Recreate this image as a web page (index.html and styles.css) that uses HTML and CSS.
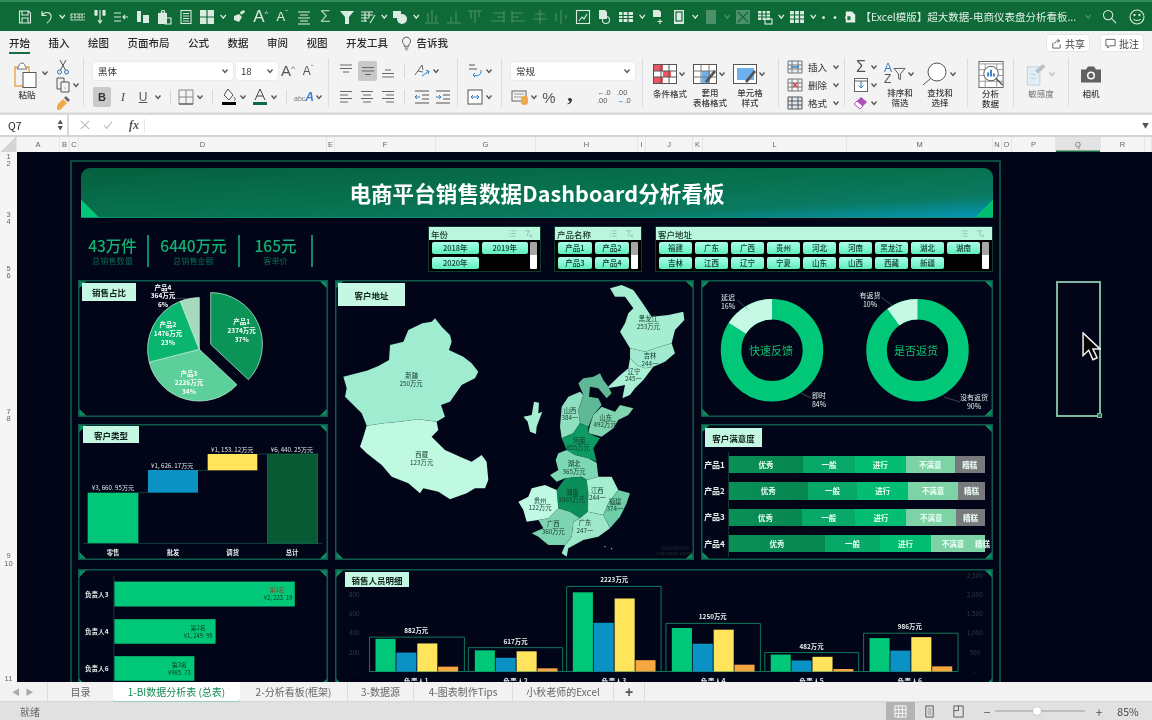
FILE: index.html
```html
<!DOCTYPE html>
<html lang="zh-CN">
<head>
<meta charset="utf-8">
<title>电商仪表盘分析看板</title>
<link rel="stylesheet" href="styles.css">
</head>
<body>
<svg class="defs" aria-hidden="true"><symbol id="car" viewBox="0 0 10 10"><path d="M2.5 3.5L5 6.5l2.5-3" fill="none" stroke="currentColor" stroke-width="1.3"/></symbol>
<symbol id="at" viewBox="0 0 18 18"><path d="M3 3h12M3 6.500h12M6 10h6" fill="none" stroke="currentColor" stroke-width="1"/></symbol>
<symbol id="am" viewBox="0 0 18 18"><path d="M3 5.500h12M3 9h12M6 12.500h6" fill="none" stroke="currentColor" stroke-width="1"/></symbol>
<symbol id="ab" viewBox="0 0 18 18"><path d="M6 8h6M3 11.500h12M3 15h12" fill="none" stroke="currentColor" stroke-width="1"/></symbol>
<symbol id="al" viewBox="0 0 18 18"><path d="M3 3.500h12M3 7h8M3 10.500h12M3 14h8" fill="none" stroke="currentColor" stroke-width="1"/></symbol>
<symbol id="ac" viewBox="0 0 18 18"><path d="M3 3.500h12M5 7h8M3 10.500h12M5 14h8" fill="none" stroke="currentColor" stroke-width="1"/></symbol>
<symbol id="ar" viewBox="0 0 18 18"><path d="M3 3.500h12M7 7h8M3 10.500h12M7 14h8" fill="none" stroke="currentColor" stroke-width="1"/></symbol>
<symbol id="sli" viewBox="0 0 10 8"><path d="M1 1h1M1 4h1M1 7h1M3.500 1h5M3.500 4h5M3.500 7h5" stroke="currentColor" stroke-width=".8"/></symbol>
<symbol id="slf" viewBox="0 0 10 8"><path d="M1 1h5L4 4v3M6 5l3 3M9 5L6 8" fill="none" stroke="currentColor" stroke-width=".8"/></symbol></svg>
<div class="app">

<header class="qat">
<svg class="q" viewBox="0 0 16 16"><path d="M2.500 2h9l2 2v10h-11zM5 2v4h6V2M5 14V9h6v5"/></svg>
<svg class="q" viewBox="0 0 16 16"><path d="M4 2v4.500h4.500M4 6.500c2-4 8-4 9 0 .7 3-1.500 5.500-4 7.500"/></svg>
<svg class="qc"><use href="#car"/></svg>
<svg class="q" viewBox="0 0 16 16"><path d="M1 5h14M1 8h14M1 11h14M1 5v6M5 5v6M9 5v6M12 5v6" stroke-dasharray="2 .6"/></svg>
<svg class="q" viewBox="0 0 16 16"><path d="M4 1v6M12 1v6M8 1v14M6 11l2 3 2-3M3 1v5h2V1M11 1v5h2V1"/></svg>
<svg class="q" viewBox="0 0 16 16"><path d="M1 4h7M1 8h7M1 12h7M15 8H10M12 6l-2 2 2 2"/></svg>
<svg class="q" viewBox="0 0 16 16"><rect class="f" x="2" y="2" width="4" height="11"/><rect class="f" x="8" y="6" width="6" height="8"/></svg>
<svg class="q" viewBox="0 0 16 16"><path class="f" d="M2 4h9v11H2z"/><path d="M6 1.500h2l1 2.500H5zM9 9h6v6H9z"/></svg>
<svg class="q" viewBox="0 0 16 16"><rect x="3" y="1.500" width="10" height="13"/><path d="M5 4.500h6M5 7h6M5 9.500h6M5 12h6"/></svg>
<svg class="q" viewBox="0 0 16 16"><rect class="f" x="1" y="1" width="14" height="14"/><path class="cut" d="M8 1v14M1 8h14"/></svg>
<svg class="qc"><use href="#car"/></svg>
<svg class="q" viewBox="0 0 16 16"><path class="f" d="M9 3l4-2 1 2-4 3zM3 7l5-2 3 3-3 5-5-2z"/></svg>
<span class="qa">A<sup>^</sup></span>
<span class="qa sm">A<sup>ˇ</sup></span>
<svg class="q" viewBox="0 0 16 16"><path d="M2 3h12M4 6h8M2 9h12M4 12h8M2 15h12"/></svg>
<span class="qs">Σ</span>
<svg class="q" viewBox="0 0 16 16"><path class="f" d="M1 2h14L10 8v7H6V8z"/></svg>
<svg class="q" viewBox="0 0 16 16"><path d="M1 3h12M1 6h12M1 9h8M1 12h6M5 3v10M9 3v6M15 6l-5 8"/></svg>
<svg class="qc"><use href="#car"/></svg>
<svg class="q" viewBox="0 0 16 16"><path class="f" d="M1 2h8v7H1z"/><circle class="f" cx="10" cy="10" r="5"/></svg>
<svg class="qc"><use href="#car"/></svg>
<svg class="q dim" viewBox="0 0 16 16"><path d="M1 14h14M4 5v8M8 2v11M12 7v6M3 5h2M7 2h2M11 7h2"/></svg>
<svg class="q dim" viewBox="0 0 16 16"><path d="M1 14h14M5 8v6M10 2v12"/></svg>
<svg class="q dim" viewBox="0 0 16 16"><path d="M1 2h14M4 2v8M8 2v12M12 2v6"/></svg>
<svg class="q dim" viewBox="0 0 16 16"><path d="M15 2v12M4 4h11M8 8h7M2 12h13"/></svg>
<svg class="q dim" viewBox="0 0 16 16"><path d="M2 2v12M2 4h11M2 8h7M2 12h13"/></svg>
<svg class="q dim" viewBox="0 0 16 16"><path d="M8 1v14M3 5h10M1 10h14"/></svg>
<svg class="q dim" viewBox="0 0 16 16"><path d="M8 1v14M3 4v8M13 6v4"/></svg>
<svg class="q" viewBox="0 0 16 16"><rect x="1.500" y="1.500" width="13" height="13"/><path d="M4 12l3-4 2 2 3-5"/></svg>
<svg class="q" viewBox="0 0 16 16"><path class="f" d="M3 1h6l2 2v7H3v5"/><circle cx="10" cy="11" r="3.500"/></svg>
<svg class="q" viewBox="0 0 16 16"><path class="f" d="M1 3h14v10H1z"/><path class="cut" d="M1 6.500h14M1 9.500h14M5 3v10M10 3v10"/></svg>
<svg class="qc"><use href="#car"/></svg>
<svg class="q" viewBox="0 0 16 16"><path class="f" d="M3 1h6l2 2v5H3v7"/><path d="M10 10v5M7.500 12.500h5"/></svg>
<svg class="q" viewBox="0 0 16 16"><rect class="f" x="3" y="1" width="10" height="14"/><rect class="cut" x="5" y="3" width="6" height="9"/></svg>
<svg class="qc"><use href="#car"/></svg>
<svg class="q dim" viewBox="0 0 16 16"><rect class="f" x="3" y="1" width="10" height="14"/></svg>
<svg class="qc dim"><use href="#car"/></svg>
<svg class="q dim" viewBox="0 0 16 16"><rect class="f" x="1" y="1" width="14" height="14"/><path class="cut" d="M3 3l10 10M13 3L3 13"/></svg>
<svg class="q" viewBox="0 0 16 16"><path class="f" d="M1 2h12v9H1z"/><path class="cut" d="M1 5h12M1 8h12M5 2v9M9 2v9"/><rect x="8" y="10" width="7" height="5"/></svg>
<svg class="qc"><use href="#car"/></svg>
<svg class="q" viewBox="0 0 16 16"><path class="f" d="M1 2h14v12H1z"/><path class="cut" d="M1 6h14M1 10h14M5.500 2v12M10.500 2v12"/></svg>
<svg class="qc"><use href="#car"/></svg>
<span class="qdots">···</span>
<svg class="qdoc" viewBox="0 0 14 16"><path d="M1 1h8l4 4v10H1z" fill="#e4efe8"/><path d="M3 7h4v5H3z" fill="#1c7a4a"/></svg>
<span class="qtitle">【Excel模版】超大数据-电商仪表盘分析看板...</span>
<svg class="qc dim qtc"><use href="#car"/></svg>
<svg class="qr" viewBox="0 0 16 16"><circle cx="6.500" cy="6.500" r="5"/><path d="M10 10l5 5"/></svg>
<svg class="qr" viewBox="0 0 16 16"><circle cx="8" cy="8" r="7"/><circle cx="5.500" cy="6" r=".6"/><circle cx="10.500" cy="6" r=".6"/><path d="M4.500 10c1.500 2 5.500 2 7 0"/></svg>
</header>

<nav class="tabs">
<span class="tab on">开始</span><span class="tab">插入</span><span class="tab">绘图</span><span class="tab">页面布局</span><span class="tab">公式</span><span class="tab">数据</span><span class="tab">审阅</span><span class="tab">视图</span><span class="tab">开发工具</span>
<span class="tab tell"><svg class="bulb" viewBox="0 0 12 16"><path d="M6 1a4.500 4.500 0 0 0-2.500 8.200V11h5V9.200A4.500 4.500 0 0 0 6 1zM4 13h4M5 15h2" fill="none" stroke="#555"/></svg>告诉我</span>
<span class="acts">
<span class="act"><svg class="acti" viewBox="0 0 12 12"><path d="M2 5v6h8V7M4 6c1-3 3-3 5-3M7 1l2.500 2L7 5" fill="none" stroke="#555"/></svg>共享</span>
<span class="act"><svg class="acti" viewBox="0 0 12 12"><path d="M1 1.500h10v7H5L3 11V8.500H1z" fill="none" stroke="#555"/></svg>批注</span>
</span>
</nav>

<section class="ribbon">

<div class="grp g1">
<div class="paste"><svg class="pic" viewBox="0 0 24 26"><path d="M2 5h14v19H2z" fill="none" stroke="#e7a64a" stroke-width="1.400"/><path d="M6 4c0-4 6-4 6 0l2 3H4z" fill="#fff" stroke="#777"/><rect x="10" y="10.500" width="13" height="15" fill="#fff" stroke="#555"/></svg><span class="lb">粘贴</span></div>
<svg class="cr cr-paste"><use href="#car"/></svg>
<div class="clip">
<div class="ci"><svg class="ic16" viewBox="0 0 16 16"><circle cx="4.500" cy="13" r="2" fill="none" stroke="#3a6ea5"/><circle cx="11.500" cy="13" r="2" fill="none" stroke="#3a6ea5"/><path d="M5.500 11L11 1M10.500 11L5 1" stroke="#555" fill="none"/></svg></div>
<div class="ci"><svg class="ic16" viewBox="0 0 16 16"><path d="M2 1h7v11H2z" fill="none" stroke="#555"/><path d="M6 5h8v10H6z" fill="#f3f3f3" stroke="#555"/><path d="M9 11h2" stroke="#e7a64a"/></svg><svg class="cr"><use href="#car"/></svg></div>
<div class="ci"><svg class="ic16" viewBox="0 0 16 16"><path d="M3 9l5-5 4 4-5 5-2 2H2v-3z" fill="#f0a848"/><path d="M9 3l2-2 4 4-2 2z" fill="#666"/></svg></div>
</div>
</div>

<div class="grp g2">
<div class="row">
<span class="sel s-font">黑体<svg class="cr"><use href="#car"/></svg></span>
<span class="sel s-size">18<svg class="cr"><use href="#car"/></svg></span>
<span class="bigA">A<sup>^</sup></span><span class="bigA small">A<sup class="bl">ˇ</sup></span>
</div>
<div class="row">
<span class="btn on bb">B</span><span class="btn ii">I</span><span class="btn uu">U</span><svg class="cr"><use href="#car"/></svg>
<i class="sep s1"></i>
<svg class="ic18" viewBox="0 0 18 18"><path d="M2 2h14v14H2zM9 2v14M2 9h14" fill="none" stroke="#888"/><path d="M2 16h14" stroke="#444"/></svg><svg class="cr"><use href="#car"/></svg>
<i class="sep s2"></i>
<svg class="ic18" viewBox="0 0 18 18"><path d="M8 1l5 6-4 5-5-5zM14 9c1 1.500 2 3 0 3.500" fill="none" stroke="#555"/><rect x="2" y="14" width="14" height="3"/></svg><svg class="cr"><use href="#car"/></svg>
<svg class="ic18 m3" viewBox="0 0 18 18"><path d="M4 12L9 1l5 11M6 8h6" fill="none" stroke="#444"/><rect x="2" y="14" width="14" height="3" fill="#0d6b45"/></svg><svg class="cr"><use href="#car"/></svg>
<i class="sep s3"></i>
<span class="abc">abc<b>A</b></span><svg class="cr"><use href="#car"/></svg>
</div>
</div>

<div class="grp g3">
<div class="row">
<svg class="ic18"><use href="#at"/></svg><span class="btn on mid"><svg class="ic18"><use href="#am"/></svg></span><svg class="ic18 m2"><use href="#ab"/></svg>
<i class="sep s4"></i>
<svg class="ic18" viewBox="0 0 18 18"><path d="M2 13L9 3l1 5M5 9l5 1" fill="none" stroke="#666"/><path d="M9 14l7-5M13 8.500l3 .5-1 3" fill="none" stroke="#2f7fc2"/></svg><svg class="cr"><use href="#car"/></svg>
</div>
<div class="row">
<svg class="ic18"><use href="#al"/></svg><svg class="ic18 m3"><use href="#ac"/></svg><svg class="ic18 m3"><use href="#ar"/></svg>
<i class="sep s4"></i>
<svg class="ic18" viewBox="0 0 18 18"><path d="M2 3h14M2 15h14M9 7h7M9 11h7" stroke="#555" fill="none"/><path d="M7 9H2M4 7L2 9l2 2" stroke="#2f7fc2" fill="none"/></svg><svg class="ic18 m3" viewBox="0 0 18 18"><path d="M2 3h14M2 15h14M9 7h7M9 11h7" stroke="#555" fill="none"/><path d="M2 9h5M5 7l2 2-2 2" stroke="#2f7fc2" fill="none"/></svg>
</div>
</div>

<div class="grp g4">
<div class="row"><svg class="ic18" viewBox="0 0 18 18"><path d="M3 3h6M3 7h8" stroke="#555"/><path d="M15 8c1 5-4 7-8 5M9 11l-2 2 2 2" fill="none" stroke="#2f7fc2"/></svg><svg class="cr"><use href="#car"/></svg></div>
<div class="row"><svg class="ic18" viewBox="0 0 18 18"><rect x="2" y="2" width="14" height="14" fill="#fff" stroke="#555"/><path d="M5 9h8M7 7L5 9l2 2M11 7l2 2-2 2" stroke="#2f7fc2" fill="none"/></svg><svg class="cr"><use href="#car"/></svg></div>
</div>

<div class="grp g5">
<div class="row"><span class="sel s-num">常规<svg class="cr"><use href="#car"/></svg></span></div>
<div class="row">
<svg class="ic18" viewBox="0 0 18 18"><rect x="1" y="3" width="14" height="10" fill="none" stroke="#666"/><path d="M3 6h10M3 9h8" stroke="#999"/><rect x="10" y="8" width="7" height="9" rx="3" fill="#f0a848"/></svg><svg class="cr"><use href="#car"/></svg>
<span class="pct">%</span><span class="cma">,</span>
<span class="dec"><b>←</b>.0<br>.00</span><span class="dec d2">.00<br><b>→</b>.0</span>
</div>
</div>

<div class="grp g6">
<div class="big"><div class="bi"><svg class="ic24" viewBox="0 0 24 20"><rect x=".5" y=".5" width="23" height="19" fill="#fff" stroke="#555"/><path d="M1 1h9v6H1zM1 13h9v6H1z" fill="#ee5560"/><path d="M10 7h8v6h-8z" fill="#ee5560"/><path d="M.5 7h23M.5 13h23M8 .5v19M16 .5v19" stroke="#555" fill="none"/></svg><svg class="cr"><use href="#car"/></svg></div><span class="lb">条件格式</span></div>
<div class="big"><div class="bi"><svg class="ic24" viewBox="0 0 24 20"><rect x=".5" y=".5" width="23" height="19" fill="#fff" stroke="#555"/><path d="M9 7h8v12H9z" fill="#6db1ee"/><path d="M.5 7h23M.5 13h23M8 .5v19M16 .5v19" stroke="#777" fill="none"/><path d="M12 17l9-11 2 2-9 11z" fill="#555"/></svg><svg class="cr"><use href="#car"/></svg></div><span class="lb">套用<br>表格格式</span></div>
<div class="big"><div class="bi"><svg class="ic24" viewBox="0 0 24 20"><rect x=".5" y=".5" width="23" height="19" fill="#fff" stroke="#555"/><path d="M4 4h17v12H4z" fill="#6db1ee"/><path d="M12 17l9-11 2 2-9 11z" fill="#555"/></svg><svg class="cr"><use href="#car"/></svg></div><span class="lb">单元格<br>样式</span></div>
</div>

<div class="grp g7">
<div class="lr"><svg class="ic16" viewBox="0 0 16 14"><path d="M1 1h14v12H1zM5 1v12M11 1v12M1 5h14M1 9h14" fill="#e6f0f8" stroke="#777"/><path d="M4 7h8" stroke="#2f7fc2" stroke-width="1.500"/></svg><span>插入</span><svg class="cr"><use href="#car"/></svg></div>
<div class="lr"><svg class="ic16" viewBox="0 0 16 14"><path d="M1 1h14v12H1zM5 1v12M11 1v12M1 5h14M1 9h14" fill="#f3f3f3" stroke="#777"/><path d="M6 5l4 4M10 5L6 9" stroke="#d9434b" stroke-width="1.500"/></svg><span>删除</span><svg class="cr"><use href="#car"/></svg></div>
<div class="lr"><svg class="ic16" viewBox="0 0 16 14"><path d="M1 1h14v12H1zM5 1v12M11 1v12M1 5h14M1 9h14" fill="#dfeaf5" stroke="#555"/></svg><span>格式</span><svg class="cr"><use href="#car"/></svg></div>
</div>

<div class="grp g8">
<div class="clip2">
<div class="ci"><span class="sig">Σ</span><svg class="cr"><use href="#car"/></svg></div>
<div class="ci"><svg class="ic16" viewBox="0 0 16 16"><rect x="1.500" y="1.500" width="13" height="13" fill="#fff" stroke="#666"/><path d="M8 4v7M5.500 8.500L8 11l2.500-2.500" stroke="#2f7fc2" fill="none"/><path d="M1 4h14" stroke="#666"/></svg><svg class="cr"><use href="#car"/></svg></div>
<div class="ci"><svg class="ic16" viewBox="0 0 16 16"><path d="M1 9l7-7 6 5-7 7z" fill="#b04fbb"/><path d="M4 6l6 5-3 3-6-5z" fill="#fff" stroke="#b04fbb"/></svg><svg class="cr"><use href="#car"/></svg></div>
</div>
<div class="big"><div class="bi"><span class="az"><b>A</b>Z</span><svg class="fun" viewBox="0 0 14 16"><path d="M1 2h12L8 8v6l-2-1V8z" fill="none" stroke="#555"/></svg><svg class="cr"><use href="#car"/></svg></div><span class="lb">排序和<br>筛选</span></div>
<div class="big"><div class="bi"><svg class="ic26" viewBox="0 0 26 24"><circle cx="15" cy="10" r="9" fill="#fff" stroke="#555"/><path d="M8.500 16.500L1 23" stroke="#555"/></svg><svg class="cr"><use href="#car"/></svg></div><span class="lb">查找和<br>选择</span></div>
</div>

<div class="grp g9"><div class="big wide"><div class="bi"><svg class="ic26h" viewBox="0 0 26 28"><rect x=".5" y=".5" width="25" height="27" fill="#fff" stroke="#666"/><path d="M.5 3h25M.5 9h25M.5 15h25M.5 21h25M7 3v25M19 3v25" stroke="#999" fill="none"/><circle cx="13" cy="13" r="7.500" fill="#fff" stroke="#555"/><path d="M10 16v-4M13 16V9M16 16v-3" stroke="#3a7fc2" stroke-width="2"/><path d="M18 18l7 7" stroke="#555" stroke-width="1.500"/></svg></div><span class="lb">分析<br>数据</span></div></div>

<div class="grp g10"><div class="big wide"><div class="bi"><svg class="ic22" viewBox="0 0 22 24"><path d="M2 4h13v19H2z" fill="#e3edf6" stroke="#bdd0de"/><path d="M10 8l8-7 3 3-8 7z" fill="#b9c0c6"/><path d="M5 12h6M5 16h6" stroke="#bdd0de"/></svg><svg class="cr lt"><use href="#car"/></svg></div><span class="lb gray">敏感度</span></div></div>

<div class="grp g11"><div class="big wide"><div class="bi"><svg class="ic22" viewBox="0 0 22 18"><path d="M1 4h5l2-3h6l2 3h5v13H1z" fill="#5f6163"/><circle cx="11" cy="10" r="4" fill="#fff"/><circle cx="11" cy="10" r="2.500" fill="#5f6163"/></svg></div><span class="lb">相机</span></div></div>
</section>

<div class="fbar">
<div class="namebox"><span>Q7</span><span class="updown">▲<br>▼</span></div>
<div class="fbtns"><svg class="fx1" viewBox="0 0 12 12"><path d="M1 1l10 10M11 1L1 11" stroke="#bbb" stroke-width="1.300"/></svg><svg class="fx1" viewBox="0 0 12 12"><path d="M1 6l3.500 4L11 2" stroke="#bbb" stroke-width="1.300" fill="none"/></svg><span class="fxt">fx</span></div>
<span class="fcar">▼</span>
</div>

<div class="cols">
<span class="corner"></span><span>A</span><span>B</span><span>C</span><span>D</span><span>E</span><span>F</span><span>G</span><span>H</span><span>I</span><span>J</span><span>K</span><span>L</span><span>M</span><span>N</span><span>O</span><span>P</span><span class="act-col">Q</span><span>R</span><span></span>
</div>

<main class="sheet">
<div class="rows"><span>1</span><span>2</span><span>3</span><span>4</span><span>5</span><span>6</span><span>7</span><span>8</span><span>9</span><span>10</span><span>11</span></div>
<div class="canvas">
<div class="dash">

<div class="banner"><h1>电商平台销售数据Dashboard分析看板</h1></div>

<div class="toprow">
<div class="kpis">
<div class="kpi k1"><strong>43万件</strong><small>总销售数量</small></div>
<div class="kpi k2"><strong>6440万元</strong><small>总销售金额</small></div>
<div class="kpi k3"><strong>165元</strong><small>客单价</small></div>
</div>
<div class="slicer sl1"><div class="slh"><span>年份</span><svg class="sh"><use href="#sli"/></svg><svg class="sh"><use href="#slf"/></svg></div><div class="slb"><div class="slg"><span>2018年</span><span>2019年</span><span>2020年</span></div><i class="scr"></i></div></div>
<div class="slicer sl2"><div class="slh"><span>产品名称</span><svg class="sh"><use href="#sli"/></svg><svg class="sh"><use href="#slf"/></svg></div><div class="slb"><div class="slg"><span>产品1</span><span>产品2</span><span>产品3</span><span>产品4</span></div><i class="scr"></i></div></div>
<div class="slicer sl3"><div class="slh"><span>客户地址</span><svg class="sh"><use href="#sli"/></svg><svg class="sh"><use href="#slf"/></svg></div><div class="slb"><div class="slg"><span>福建</span><span>广东</span><span>广西</span><span>贵州</span><span>河北</span><span>河南</span><span>黑龙江</span><span>湖北</span><span>湖南</span><span>吉林</span><span>江西</span><span>辽宁</span><span>宁夏</span><span>山东</span><span>山西</span><span>西藏</span><span>新疆</span></div><i class="scr"></i></div></div>
</div>

<div class="grid">

<section class="panel p-pie">
<h2 class="tag t-pie">销售占比</h2>
<svg class="fill" viewBox="78 280 250 137">
<g stroke="#c9f2de" stroke-width=".7">
<path fill="#0a9458" d="M210.700 344.300L210.700 292.600A51.700 51.700 0 0 1 248.400 379.700Z"/>
<path fill="#5dcf9a" d="M199.300 349.300L237 384.700A51.700 51.700 0 0 1 149.200 362.200Z"/>
<path fill="#0ab56f" d="M199.300 349.300L149.200 362.200A51.700 51.700 0 0 1 180.300 301.200Z"/>
<path fill="#a6dabd" d="M199.300 349.300L180.300 301.200A51.700 51.700 0 0 1 199.300 297.600Z"/>
</g>
<path d="M175 298.500h14" stroke="#5a7a70" stroke-width=".5"/>
<g class="pl">
<text x="241.700" y="324">产品1</text><text x="241.700" y="333">2374万元</text><text x="241.700" y="342">37%</text>
<text x="168" y="327">产品2</text><text x="168" y="336">1476万元</text><text x="168" y="344.500">23%</text>
<text x="189" y="376">产品3</text><text x="189" y="385">2226万元</text><text x="189" y="393.500">34%</text>
<text x="163" y="289.500">产品4</text><text x="163" y="298">364万元</text><text x="163" y="307">6%</text>
</g>
</svg>
</section>

<section class="panel p-map">
<h2 class="tag t-map">客户地址</h2>
<svg class="fill" viewBox="0 0 1077 840">
<g stroke="#0b1a20" stroke-width=".6" stroke-opacity=".3" stroke-linejoin="round">
<path fill="#9fecd0" d="M25 290L65 280 95 272 130 258 162 240 165 195 205 185 220 150 262 130 290 125 300 115 320 140 345 165 350 185 342 210 385 230 410 250 430 275 420 295 380 315 345 365 318 375 330 410 305 425 250 418 195 425 145 430 95 437 80 400 55 375 30 350 35 325Z"/>
<path fill="#bff9e2" d="M95 437L145 430 195 425 250 418 305 425 310 450 290 470 330 510 375 530 410 545 440 525 455 545 460 600 450 625 420 625 395 640 345 658 310 635 265 625 255 640 220 610 170 590 140 555 95 520 75 500 85 470Z"/>
<path fill="#a6eed2" d="M825 25L860 15 895 30 920 65 950 110 1000 105 1045 95 1048 120 1020 150 1010 190 975 200 930 215 885 205 855 155 870 130 880 100 895 85 870 50 840 50Z"/>
<path fill="#a0ebcf" d="M885 205L930 215 975 200 1010 190 1020 220 990 245 955 260 930 265 905 255 885 235Z"/>
<path fill="#a8efd4" d="M885 235L905 255 930 265 955 260 925 300 900 325 885 345 862 355 870 315 845 320 815 325 850 290 880 265Z"/>
<path fill="#5fb996" d="M730 310L745 295 775 290 795 280 805 300 820 320 830 340 815 355 790 325 765 320 762 350 790 355 800 375 775 405 760 440 735 430 730 390 745 345Z"/>
<path fill="#8fe0c0" d="M735 335L745 345 730 390 735 430 715 460 680 475 675 440 680 380 700 350Z"/>
<path fill="#80d4b0" d="M775 405L800 380 840 395 855 375 895 385 880 405 850 420 835 445 800 470 760 460 765 435Z"/>
<path fill="#0d9a63" d="M680 475L715 460 735 430 760 440 760 460 795 475 775 505 785 545 760 535 720 525 695 510Z"/>
<path fill="#7dd8b4" d="M670 520L695 510 720 525 760 535 785 548 790 590 755 600 740 590 690 595 665 605 645 585 670 570 662 540Z"/>
<path fill="#0a8f5a" d="M690 595L740 590 755 600 760 640 758 695 735 715 705 695 670 685 665 630Z"/>
<path fill="#a5eed0" d="M755 600L790 590 830 590 850 630 820 670 805 705 758 695 760 640Z"/>
<path fill="#6fcda8" d="M850 630L885 640 875 670 855 710 825 745 805 705 820 670Z"/>
<path fill="#9ee8ca" d="M735 715L758 695 805 705 825 745 790 770 745 780 700 805 695 830 680 820 690 795 710 770 715 725Z"/>
<path fill="#7dd4b0" d="M610 720L640 715 670 685 705 695 735 715 715 725 710 770 690 795 640 795 610 770 590 760 625 745Z"/>
<path fill="#c0fae4" d="M550 665L580 650 590 625 630 615 665 630 670 685 640 715 610 720 575 725 565 690Z"/>
<path fill="#a8f0d5" d="M565 410L590 405 597 365 612 368 610 400 622 395 605 440 603 462 585 455 578 425Z"/>
</g>
<circle cx="810" cy="800" r="2" fill="#9fecd0"/><circle cx="830" cy="806" r="2" fill="#9fecd0"/>
<g class="ml">
<text x="230" y="295">新疆</text><text x="228" y="317">250万元</text>
<text x="260" y="532">西藏</text><text x="260" y="554">123万元</text>
<text x="940" y="124">黑龙江</text><text x="940" y="147">253万元</text>
<text x="945" y="235">吉林</text><text x="945" y="257">244一</text>
<text x="897" y="282">辽宁</text><text x="895" y="304">245一</text>
<text x="705" y="399">山西</text><text x="705" y="421">384一</text>
<text x="812" y="420">山东</text><text x="810" y="442">492万元</text>
<text x="732" y="488">河南</text><text x="730" y="511">855万元</text>
<text x="717" y="559">湖北</text><text x="717" y="581">365万元</text>
<text x="712" y="644">湖南</text><text x="710" y="666">1003万元</text>
<text x="787" y="638">江西</text><text x="787" y="659">244一</text>
<text x="840" y="672">福建</text><text x="840" y="694">374一</text>
<text x="615" y="669">贵州</text><text x="615" y="691">122万元</text>
<text x="655" y="739">广西</text><text x="655" y="761">360万元</text>
<text x="750" y="736">广东</text><text x="750" y="758">247一</text>
</g>
<g class="wm"><text x="1020" y="809">由必应提供支持</text><text x="1020" y="826">© Microsoft, NavInfo</text></g>
</svg>
</section>

<section class="panel p-don">
<svg class="fill" viewBox="701 280 292 137">
<circle cx="772" cy="350.300" r="41" fill="none" stroke="#00c878" stroke-width="20.500"/>
<path d="M772 309.300A41 41 0 0 0 737.400 328.300" fill="none" stroke="#c6f8e5" stroke-width="20.500"/>
<circle cx="917.500" cy="350.300" r="41" fill="none" stroke="#00c878" stroke-width="20.500"/>
<path d="M917.500 309.300A41 41 0 0 0 893.400 317.100" fill="none" stroke="#c6f8e5" stroke-width="20.500"/>
<g stroke="#6a8a80" stroke-width=".5" fill="none"><path d="M737 300l12 10M801 393l10 5M881 297l12 9M944 397l16 5"/></g>
<text class="dc" x="771" y="355">快速反馈</text><text class="dc" x="916" y="355">是否返货</text>
<g class="dl"><text x="728" y="300">延迟</text><text x="728" y="309">16%</text><text x="819" y="398">即时</text><text x="819" y="407">84%</text><text x="870" y="298">有返货</text><text x="870" y="307">10%</text><text x="974" y="400">没有返货</text><text x="974" y="409">90%</text></g>
</svg>
</section>

<section class="panel p-wf">
<h2 class="tag t-wf">客户类型</h2>
<svg class="fill" viewBox="24 12 750 408">
<rect x="53" y="218" width="152" height="152" fill="#00c878"/>
<rect x="234" y="150" width="150" height="68" fill="#0a92c4"/>
<rect x="413" y="102" width="149" height="49" fill="#ffe45c"/>
<rect x="592" y="102" width="151" height="268" fill="#075a34" stroke="#0e7a50" stroke-width="2"/>
<path d="M40 370h717M205 218h29M384 151h29M562 102h30" stroke="#1a5a48" stroke-width="2"/>
<g class="wl"><text x="129" y="210">¥3, 660. 95万元</text><text x="307" y="143">¥1, 626. 17万元</text><text x="487" y="96">¥1, 153. 12万元</text><text x="666" y="96">¥6, 440. 25万元</text></g>
<g class="wx"><text x="129" y="404">零售</text><text x="309" y="404">批发</text><text x="488" y="404">调货</text><text x="666" y="404">总计</text></g>
</svg>
</section>

<section class="panel p-sat">
<h2 class="tag t-sat">客户满意度</h2>
<div class="satrow"><span class="satl">产品1</span><div class="satb"><i class="s1c" style="flex-basis:29%">优秀</i><i class="s2c" style="flex-basis:20.200%">一般</i><i class="s3c" style="flex-basis:19.800%">进行</i><i class="s4c" style="flex-basis:19.200%">不满意</i><i class="s5c" style="flex-basis:11.800%">糟糕</i></div></div>
<div class="satrow"><span class="satl">产品2</span><div class="satb"><i class="s1c" style="flex-basis:30.700%">优秀</i><i class="s2c" style="flex-basis:19.400%">一般</i><i class="s3c" style="flex-basis:19.900%">进行</i><i class="s4c" style="flex-basis:19.500%">不满意</i><i class="s5c" style="flex-basis:10.500%">糟糕</i></div></div>
<div class="satrow"><span class="satl">产品3</span><div class="satb"><i class="s1c" style="flex-basis:28.600%">优秀</i><i class="s2c" style="flex-basis:20.800%">一般</i><i class="s3c" style="flex-basis:19.900%">进行</i><i class="s4c" style="flex-basis:19.500%">不满意</i><i class="s5c" style="flex-basis:11.200%">糟糕</i></div></div>
<div class="satrow"><span class="satl">产品4</span><div class="satb"><i class="s1c" style="flex-basis:37.500%">优秀</i><i class="s2c" style="flex-basis:21.500%">一般</i><i class="s3c" style="flex-basis:19.900%">进行</i><i class="s4c" style="flex-basis:17.200%">不满意</i><i class="s4c s-last" style="flex-basis:3.800%"><b>糟糕</b></i></div></div>
</section>

<section class="panel p-rank">
<svg class="fill" viewBox="24 447 750 360">
<path d="M127 468v340" stroke="#1a5a48" stroke-width="2"/>
<g fill="#00c878" stroke="#0e9a68"><rect x="129" y="486" width="550" height="75"/><rect x="129" y="600" width="308" height="75"/><rect x="129" y="713" width="243" height="75"/></g>
<g class="rl"><text x="75" y="532">负责人3</text><text x="75" y="644">负责人4</text><text x="75" y="757">负责人6</text></g>
<g class="rv"><text class="r1" x="625" y="518">第1名</text><text x="628" y="543">¥2, 223. 19</text><text x="384" y="632">第2名</text><text x="384" y="657">¥1, 249. 98</text><text x="327" y="745">第3名</text><text x="327" y="770">¥985. 73</text></g>
</svg>
</section>

<section class="panel p-col">
<h2 class="tag t-col">销售人员明细</h2>
<svg class="fill" viewBox="335 569 658 120">
<g fill="none" stroke="#0f7a5a" stroke-width="1"><path d="M364.500 673.300V638.300H461V673.300M465 673.300V649H561V673.300M565 673.300V586.700H661V673.300M666 673.300V624.300H762V673.300M766.500 673.300V654H862V673.300M867 673.300V634.300H963V673.300"/><path d="M364 673.300h599"/></g>
<g fill="#00c878"><rect x="370.600" y="640" width="20.400" height="33.300"/><rect x="471.600" y="651.700" width="20.400" height="21.600"/><rect x="571.300" y="592.700" width="20.400" height="80.600"/><rect x="672" y="629" width="20.400" height="44.300"/><rect x="772.500" y="656" width="20.400" height="17.300"/><rect x="873" y="639.300" width="20.400" height="34"/></g>
<g fill="#0a92c4"><rect x="391.800" y="654" width="20.400" height="19.300"/><rect x="492.800" y="659.300" width="20.400" height="14"/><rect x="592.500" y="623.700" width="20.400" height="49.600"/><rect x="693.200" y="645" width="20.400" height="28.300"/><rect x="793.700" y="662" width="20.400" height="11.300"/><rect x="894.200" y="652" width="20.400" height="21.300"/></g>
<g fill="#ffe45c"><rect x="413.100" y="644.700" width="20.400" height="28.600"/><rect x="514.100" y="652.700" width="20.400" height="20.600"/><rect x="613.800" y="599" width="20.400" height="74.300"/><rect x="714.500" y="630.700" width="20.400" height="42.600"/><rect x="815" y="658.300" width="20.400" height="15"/><rect x="915.500" y="638.300" width="20.400" height="35"/></g>
<g fill="#f5a742"><rect x="434.300" y="668.300" width="20.400" height="5"/><rect x="535.300" y="670" width="20.400" height="3.300"/><rect x="635" y="661.700" width="20.400" height="11.600"/><rect x="735.700" y="666.300" width="20.400" height="7"/><rect x="836.200" y="670.700" width="20.400" height="2.600"/><rect x="936.700" y="668" width="20.400" height="5.300"/></g>
<g class="cl"><text x="412" y="634.500">882万元</text><text x="513" y="645">617万元</text><text x="613.400" y="582.500">2223万元</text><text x="713.600" y="620">1250万元</text><text x="814" y="650.500">482万元</text><text x="914" y="630.500">986万元</text></g>
<g class="ca"><text x="349" y="597.500">800</text><text x="349" y="617">600</text><text x="349" y="636.500">400</text><text x="349" y="656">200</text><text x="349" y="675.500">-</text><text x="980" y="578">2,500</text><text x="980" y="597.500">2,000</text><text x="980" y="617">1,500</text><text x="980" y="636.500">1,000</text><text x="980" y="656">500</text><text x="980" y="675.500">-</text></g>
<g class="cx"><text x="412" y="686">负责人1</text><text x="513" y="686">负责人2</text><text x="613" y="686">负责人3</text><text x="714" y="686">负责人4</text><text x="814" y="686">负责人5</text><text x="914" y="686">负责人6</text></g>
</svg>
</section>
</div>
</div>
<div class="selbox"><i class="handle"></i></div>
<svg class="cursor" viewBox="0 0 20 32"><path d="M1 1v24l6-5.500 4.500 10 4.500-2-4.500-9.500H19z" fill="#050505" stroke="#f2f2f2" stroke-width="1.600"/></svg>
</div>
</main>

<div class="sheettabs">
<span class="nav">◀&nbsp;&nbsp;&nbsp;▶</span>
<span class="st st-a">目录</span><span class="st st-b on">1-BI数据分析表 (总表)</span><span class="st st-c">2-分析看板(框架)</span><span class="st st-d">3-数据源</span><span class="st st-e">4-图表制作Tips</span><span class="st st-f">小秋老师的Excel</span><span class="st st-g">+</span>
</div>

<footer class="status">
<span class="ready">就绪</span>
<span class="view on"><svg class="vi" viewBox="0 0 14 14"><path d="M1 1h12v12H1zM1 5h12M1 9h12M5 1v12M9 1v12" fill="none" stroke="#fff"/></svg></span>
<span class="view"><svg class="vi" viewBox="0 0 14 14"><path d="M3 1h8v12H3z" fill="none" stroke="#555"/><path d="M5 3h4v8H5z" fill="#bbb"/></svg></span>
<span class="view"><svg class="vi" viewBox="0 0 14 14"><path d="M2 1h10v12H2zM7 1v5H2" fill="none" stroke="#555"/></svg></span>
<span class="zm">−</span><span class="slider"><i></i></span><span class="zm">+</span><span class="pc">85%</span>
</footer>
</div>
</body>
</html>
```
FILE: styles.css
```css
*{box-sizing:border-box}
html,body{margin:0;padding:0;height:100%;overflow:hidden}
body{font-family:"Noto Sans CJK SC","Liberation Sans",sans-serif;background:#f3f3f3;color:#222}
.defs{position:absolute;width:0;height:0}
.app{width:1152px;height:720px;display:flex;flex-direction:column;overflow:hidden;filter:blur(.35px)}

/* title bar */
.qat{height:31px;flex:none;background:#0e6a36;border-top:2px solid #2f8d58;display:flex;align-items:center;padding-left:14px;color:#dcebe2}
.q{width:16px;height:16px;margin:0 2.750px;flex:none;fill:none;stroke:currentColor;stroke-width:1.100}
.q .f{fill:currentColor;stroke:none}
.q .cut{stroke:#0e6a36;fill:none;stroke-width:1.200}
.q.dim,.qc.dim{opacity:.3}
.qc{width:10.500px;height:11px;flex:none;color:#dcebe2}
.qa{width:21.500px;flex:none;text-align:center;font:300 17px/16px "Liberation Sans",sans-serif}
.qa sup{font-size:8px;vertical-align:6px;line-height:0}
.qa.sm{font-size:13px}
.qs{width:21.500px;flex:none;text-align:center;font:300 17px/16px "Liberation Sans",sans-serif;opacity:.75}
.qdots{width:21.500px;flex:none;text-align:center;font-size:11px;font-weight:700;letter-spacing:.5px}
.qdoc{width:11px;height:14px;margin-left:5px;flex:none}
.qtitle{margin-left:5px;font-size:10.500px;white-space:nowrap;width:219px;flex:none;color:#e4f0e9}
.qtc{margin-left:3px}
.qr{width:15px;height:15px;flex:none;fill:none;stroke:currentColor;stroke-width:1.100;margin-left:9px}
.qr+.qr{margin-left:12px;width:16px;height:16px}

/* ribbon tabs */
.tabs{height:24px;flex:none;display:flex;align-items:center;padding-left:9px;gap:18.500px;font-size:10.500px;background:#f3f3f3}
.tab{position:relative;line-height:24px;white-space:nowrap;font-weight:500;color:#2a2a2a}
.tab.on::after{content:"";position:absolute;left:0;right:0;bottom:1px;height:2px;background:#1c6b42}
.tell{display:flex;align-items:center;gap:5px;margin-left:-6px}
.bulb{width:11px;height:15px}
.acts{margin-left:auto;display:flex;gap:10px;padding-right:8px}
.act{display:flex;align-items:center;justify-content:center;gap:3px;width:44px;height:18px;background:#fff;border:1px solid #e6e6e6;border-radius:3px;font-size:10px;color:#444}
.acti{width:11px;height:11px}

/* ribbon body */
.ribbon{height:58px;flex:none;display:flex;background:#f3f3f3;color:#555;border-bottom:1px solid #e3e3e3}
.grp{height:49px;margin-top:3px;border-right:1px solid #dcdcdc;flex:none;display:flex;flex-direction:column;gap:6px;padding-top:3px}
.g1{width:84px;flex-direction:row;gap:0;padding:0 0 0 13px}
.g2{width:245px;padding-left:9px}
.g3{width:129px;padding-left:8px}
.g4{width:44px;padding-left:8px}
.g5{width:141px;padding-left:9px}
.g6{width:136px;padding-left:7px;flex-direction:row;gap:0}
.g7{width:66px;padding:0 0 0 8px;gap:0}
.g8{width:123px;padding:0 0 0 8px;flex-direction:row;gap:0}
.g9{width:46px;padding:0}
.g10{width:55px;padding:0}
.g11{width:44px;padding:0;border-right:0}
.row{display:flex;align-items:center;height:20px;flex:none}
.cr{width:10px;height:10px;flex:none;color:#555}
.cr.lt{color:#bbb}
.ic16{width:16px;height:16px;flex:none}
.ic18{width:18px;height:18px;flex:none;color:#666}
.ic24{width:24px;height:20px;flex:none}
.ic26{width:26px;height:24px;flex:none}
.ic26h{width:26px;height:27px;flex:none}
.ic22{width:22px;height:23px;flex:none}
.m2{margin-left:2px}.m3{margin-left:3px}
.lb{font-size:8.500px;line-height:9.500px;color:#3c3c3c;text-align:center;display:block;font-weight:500;white-space:nowrap}
.lb.gray{color:#888}
.paste{width:28px;display:flex;flex-direction:column;align-items:flex-start;padding-top:4px}
.pic{width:24px;height:26px;flex:none}
.paste .lb{width:28px;margin-top:2px}
.cr-paste{margin-top:10px;margin-left:-1px}
.clip{margin-left:5px;display:flex;flex-direction:column}
.ci{height:18px;display:flex;align-items:center;flex:none}
.clip2{width:27px;display:flex;flex-direction:column}
.sel{height:18px;background:#fff;border-radius:3px;display:flex;align-items:center;justify-content:space-between;padding:0 3px 0 5px;font-size:9.500px;color:#333;box-shadow:0 0 0 .5px #e4e4e4}
.s-font{width:140px}.s-size{width:42px;margin-left:3px}.s-num{width:124px}
.bigA{width:20px;text-align:center;font:300 15px/18px "Liberation Sans",sans-serif;color:#555}
.bigA:first-of-type{margin-left:2px}
.bigA sup{font-size:8px;line-height:0;vertical-align:5px}
.bigA.small{font-size:12px}
.bl{color:#2f7fc2}
.btn{width:18px;height:20px;display:flex;align-items:center;justify-content:center;flex:none;border-radius:2px;font:11px "Liberation Sans",sans-serif;color:#555}
.btn.on{background:#c9c9c9}
.bb{font-weight:700;color:#333}
.ii{font-family:"Liberation Serif",serif;font-style:italic;font-size:13px;margin-left:3px}
.uu{text-decoration:underline;margin-left:2px;font-size:12px;margin-right:1px}
.sep{display:block;width:1px;height:14px;background:#d8d8d8;flex:none}
.s1{margin:0 6px 0 7px}.s2{margin:0 7px}.s3{margin:0 7px}.s4{margin:0 8px 0 7px}
.mid{width:19px;margin-left:3px}.mid .ic18{width:18px;height:18px}
.abc{width:20px;font:7px "Liberation Sans",sans-serif;color:#777;white-space:nowrap}
.abc b{font:italic 700 12px "Liberation Sans",sans-serif;color:#3a7fd0}
.pct{width:18px;margin-left:1px;text-align:center;font:15px "Liberation Sans",sans-serif;color:#555}
.cma{width:18px;margin-left:3px;text-align:center;font:700 22px/12px "Liberation Serif",serif;color:#333;height:18px}
.dec{width:14px;margin-left:18px;font:7.500px/8.500px "Liberation Sans",sans-serif;color:#555}
.dec b{color:#2f7fc2;font-weight:400}
.d2{margin-left:6px}
.big{width:40px;display:flex;flex-direction:column;align-items:center;padding-top:3px}
.g6 .big{padding-top:0}
.big.wide{width:100%}
.bi{height:26px;display:flex;align-items:center;justify-content:center;margin-bottom:2px}
.lr{height:18px;flex:none;display:flex;align-items:center;font-size:9.500px;color:#333}
.lr span{margin:0 4px 0 5px}
.sig{width:16px;text-align:center;font:16px/16px "Liberation Sans",sans-serif;color:#555}
.az{width:9px;font:12px/10.500px "Liberation Sans",sans-serif;color:#555;display:block}
.az b{display:block;color:#2f7fc2;font-weight:400}
.fun{width:13px;height:16px}

/* formula bar */
.fbar{height:24px;flex:none;background:#fff;border-top:2px solid #d9d9d9;border-bottom:2px solid #d4d4d4;display:flex;align-items:center}
.namebox{width:69px;height:20px;display:flex;align-items:center;justify-content:space-between;padding:0 4px 0 8px;font-size:10.500px;color:#222;border-right:2px solid #d9d9d9;background:#fff;flex:none}
.updown{font-size:5.500px;line-height:6.500px;color:#555;text-align:center}
.fbtns{display:flex;align-items:center;gap:13px;padding-left:11px;width:76px;height:13px;border-right:1px solid #e6e6e6;flex:none}
.fx1{width:10px;height:10px}
.fxt{font:italic 700 12px "Liberation Serif",serif;color:#555;margin-left:3px}
.fcar{margin-left:auto;margin-right:3px;font-size:7px;color:#555}

/* headers */
.cols{height:15px;flex:none;display:grid;grid-template-columns:17px 43px 10px 9px 248px 8px 101px 100px 102px 8px 47px 10px 144px 146px 9px 10px 44px 45px 44px 7px;background:#f5f5f5;font:7.500px/15px "Liberation Sans",sans-serif;color:#666;text-align:center}
.cols span{border-right:1px solid #e6e6e6}
.act-col{background:#e3e3e3;box-shadow:inset 0 -1.500px 0 #1c6b42}
.corner{background:linear-gradient(135deg,transparent 50%,#d5d5d5 50%)}
.sheet{height:530px;flex:none;display:flex;background:#020518}
.rows{width:17px;flex:none;background:#f5f5f5;display:grid;grid-template-rows:8px 7px 51px 7px 47px 7px 136px 7px 137px 8px 115px;font:7.500px/7px "Liberation Sans",sans-serif;color:#666;text-align:center}
.rows span{display:flex;align-items:flex-end;justify-content:center}
.canvas{flex:1;min-width:0;position:relative;overflow:hidden;background:#020518}

/* dashboard */
.dash{width:931px;height:560px;margin:8px 0 0 53px;border:2px solid #0c4a3e;padding:6px 6px 0;color:#fff}
.banner{margin-left:3px;height:50px;border-radius:9px 9px 0 0;display:flex;align-items:center;justify-content:center;background:linear-gradient(45deg,#00c878 50%,transparent 50%) bottom left/17px 18px no-repeat,linear-gradient(315deg,#00c070 50%,transparent 50%) bottom right/17px 18px no-repeat,linear-gradient(to bottom right,#05603f 0%,#07724f 50%,#0a7a62 78%,#0497b8 100%);border-bottom:1px solid #0c8f72}
.banner h1{margin:0;font-size:21.500px;font-weight:700;letter-spacing:.1px;color:#fff}
.toprow{display:flex;height:46px;margin-top:8px}
.kpis{display:flex;width:235px;height:32px;margin-top:9px;flex:none}
.kpi{border-right:2px solid #0e8a66;display:flex;flex-direction:column;align-items:center;justify-content:center}
.k1{width:71px}.k2{width:91px}.k3{width:73px}
.kpi strong{font-size:15.500px;font-weight:500;color:#12b072;line-height:19px}
.kpi small{font-size:8.200px;line-height:11px;color:#0a6a52}
.slicer{background:#000;border:1px solid #0f3a30;flex:none;display:flex;flex-direction:column}
.sl1{width:113px;margin-left:115px}
.sl2{width:88px;margin-left:13px}
.sl3{width:338px;margin-left:13px}
.slh{height:13px;background:#b9f6dd;display:flex;align-items:center;color:#17352a;font-size:8.500px;font-weight:500;padding-left:2px;flex:none}
.slh span{margin-right:auto}
.sh{width:9px;height:7px;margin-right:7px;color:#8aa89a;flex:none}
.slb{flex:1;display:flex;padding:2px 3px 2px 3px;gap:2px}
.slg{flex:1;display:grid;gap:3px;grid-auto-rows:12px}
.slg span{background:linear-gradient(180deg,#aaffe8,#5fefbe);border-radius:2px;font-size:7.500px;line-height:12px;text-align:center;color:#0f3a2a;font-weight:500}
.sl1 .slg{grid-template-columns:1fr 1fr}
.sl2 .slg{grid-template-columns:1fr 1fr}
.sl3 .slg{grid-template-columns:repeat(9,1fr)}
.scr{display:block;width:7px;background:linear-gradient(180deg,#a6a6a6 50%,#fff 50%);flex:none;border-radius:1px}

.grid{display:grid;grid-template-columns:250px 359px 292px;grid-template-rows:137px 136px 120px;gap:7px;margin-top:8px;margin-left:0}
.panel{position:relative;box-shadow:inset 0 0 0 1.500px #0e5a4a;background:linear-gradient(135deg,#0a8a5e 50%,transparent 50%) top left/10px 9px no-repeat,linear-gradient(225deg,#0a8a5e 50%,transparent 50%) top right/10px 9px no-repeat,linear-gradient(45deg,#0a8a5e 50%,transparent 50%) bottom left/10px 9px no-repeat,linear-gradient(315deg,#0a8a5e 50%,transparent 50%) bottom right/10px 9px no-repeat}
.fill{display:block;width:100%;height:100%}
.p-map{grid-column:2;grid-row:1/3}
.p-don{grid-column:3;grid-row:1}
.p-pie{grid-column:1;grid-row:1}
.p-wf{grid-column:1;grid-row:2}
.p-sat{grid-column:3;grid-row:2;padding-top:32px;display:flex;flex-direction:column;gap:9px}
.p-rank{grid-column:1;grid-row:3;margin-top:2px}
.p-col{grid-column:2/4;grid-row:3;margin-top:2px}
.tag{position:absolute;margin:0;background:#c4f8e2;color:#0f1f1a;font-size:8.500px;font-weight:700;display:flex;align-items:center;justify-content:center;z-index:1}
.t-pie{left:4px;top:3px;width:54px;height:18px}
.t-map{left:3px;top:3px;width:67px;height:23px}
.t-wf{left:5px;top:2px;width:56px;height:17px}
.t-sat{left:4px;top:4px;width:57px;height:19px}
.t-col{left:10px;top:3px;width:64px;height:15px}

/* svg text */
.pl text{font-size:6.500px;font-weight:700;fill:#fff;text-anchor:middle}
.ml text{font-size:19px;fill:#143a2e;text-anchor:middle}
.wm text{font-size:12px;fill:#20303a;text-anchor:middle}
.dc{font-size:11px;fill:#0ec070;text-anchor:middle}
.dl text{font-size:7px;fill:#e8f5f0;text-anchor:middle}
.wl text{font-size:18.500px;fill:#dfe9e6;text-anchor:middle}
.wx text{font-size:19px;font-weight:700;fill:#e4efe9;text-anchor:middle}
.rl text{font-size:20px;font-weight:700;fill:#e8f0ec;text-anchor:middle}
.rv text{font-size:18px;fill:#0b3a28;text-anchor:middle}
.rv .r1{fill:#a04020}
.cl text{font-size:6.500px;font-weight:700;fill:#e4efe9;text-anchor:middle}
.ca text{font-size:6.500px;fill:#2a3f44;text-anchor:middle}
.cx text{font-size:7px;font-weight:700;fill:#dfe9e6;text-anchor:middle}

/* satisfaction */
.satrow{height:17.300px;display:flex;align-items:center}
.satl{width:28px;flex:none;text-align:center;font-size:8px;font-weight:700;color:#e8f0ec;border-right:1px solid #0e3a30;line-height:26px}
.satb{width:256px;height:100%;display:flex}
.satb i{font-style:normal;display:flex;align-items:center;justify-content:center;font-size:7.500px;font-weight:700;color:#eafff5;flex-grow:0;flex-shrink:0;min-width:0}
.s1c{background:linear-gradient(90deg,#099158,#07854f)}
.s2c{background:#08a868}
.s3c{background:#03bd72}
.s4c{background:#7dd3a5}
.s5c{background:#78797d}
.satb .s-last{overflow:visible;justify-content:flex-start}
.s-last b{font-weight:700;white-space:nowrap}

/* selection + pointer */
.selbox{position:absolute;left:1039px;top:129px;width:45px;height:136px;border:2px solid #7fb5a0}
.handle{position:absolute;right:-3px;bottom:-3px;width:5px;height:5px;background:#1a7a4a;border:1px solid #7fb5a0}
.cursor{position:absolute;left:1065px;top:180px;width:19px;height:30px}

/* sheet tabs */
.sheettabs{height:20px;flex:none;background:#f2f2f2;display:flex;align-items:stretch;font-size:10px;color:#666;border-bottom:1px solid #d8d8d8}
.nav{width:48px;flex:none;font-size:8px;line-height:20px;padding-left:12px;color:#aaa;white-space:nowrap;border-right:1px solid #ddd}
.st{flex:none;display:flex;align-items:center;justify-content:center;border-right:1px solid #ddd;white-space:nowrap}
.st-a{width:65px;border-right:0}
.st-b{width:127px;border:0}
.st-c{width:108px}.st-d{width:66px}.st-e{width:99px}.st-f{width:101px}
.st-g{width:31px;font:700 14px "Liberation Sans",sans-serif;color:#555}
.st.on{background:#fff;color:#138a55;box-shadow:0 1.500px 0 #9ad0b4;border-radius:0 0 2px 2px}

/* status bar */
.status{height:18px;flex:none;background:#e1e1e1;display:flex;align-items:center;font-size:10px;color:#666}
.ready{margin-left:20px;margin-right:auto}
.view{width:29px;height:100%;display:flex;align-items:center;justify-content:center}
.view.on{background:#b3b3b3}
.vi{width:13px;height:13px}
.zm{width:10px;text-align:center;font-size:12px;color:#555;margin-left:9px}
.slider{position:relative;display:block;width:90px;height:2px;background:#bdbdbd;margin:0 0 0 3px}
.slider i{position:absolute;left:38px;top:-3px;width:8px;height:8px;border-radius:50%;background:#fff;box-shadow:0 0 1px #777}
.pc{width:48px;text-align:center;font-size:10.500px;color:#444}
```
